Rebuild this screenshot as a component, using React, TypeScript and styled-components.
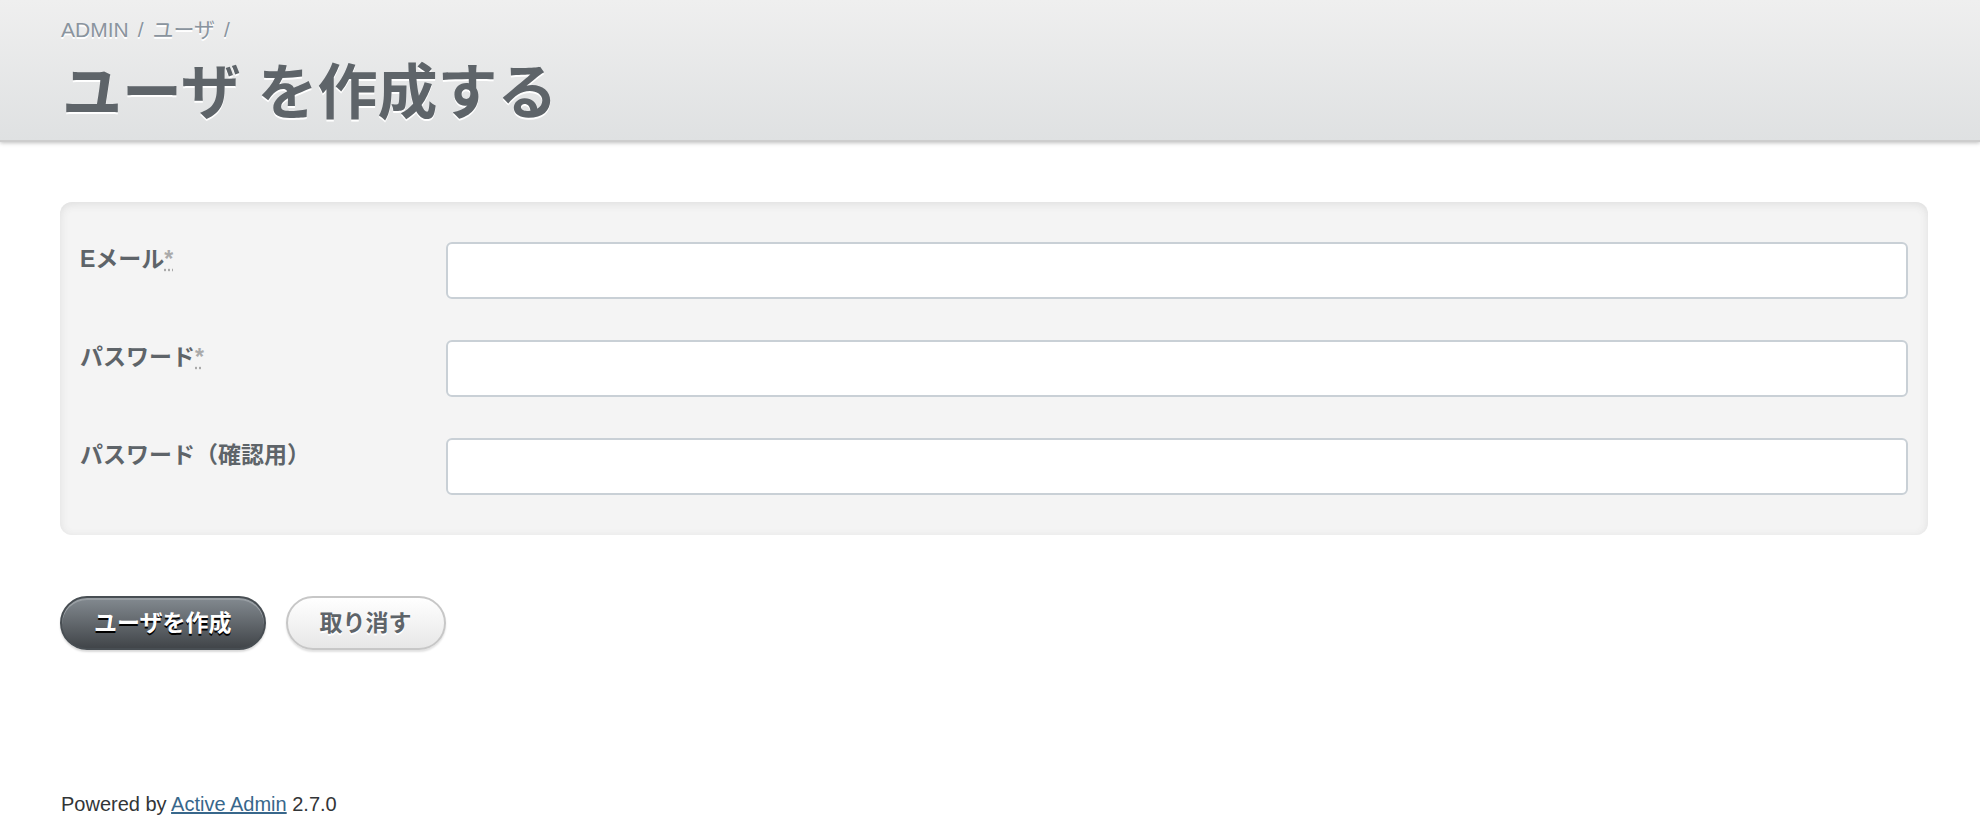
import React from "react";
import styled, { createGlobalStyle } from "styled-components";

const GlobalStyle = createGlobalStyle`
  html, body {
    margin: 0;
    padding: 0;
    background: #ffffff;
  }
  body {
    font-family: "Liberation Sans", "Noto Sans CJK JP", sans-serif;
    font-size: 23px;
    line-height: 1.5;
    color: #323537;
  }
  * { box-sizing: border-box; }
`;

const TitleBar = styled.header`
  background: linear-gradient(180deg, #efefef 0%, #dfe1e2 100%);
  border-bottom: 2px solid #cdcdcd;
  box-shadow: 0 1px 4px rgba(0, 0, 0, 0.25);
  padding: 19px 60px 16px 61px;
  position: relative;
`;

const Breadcrumb = styled.div`
  font-size: 21px;
  line-height: 21px;
  color: #8a949e;
  text-shadow: #ffffff 0 2px 0;
  display: flex;
  gap: 9px;
`;

const Crumb = styled.span`
  color: #8a949e;
`;

const Sep = styled.span`
  color: #8a949e;
`;

const Title = styled.h2`
  margin: 24px 0 0 1px;
  font-size: 60px;
  line-height: 60px;
  font-weight: bold;
  color: #5e6469;
  text-shadow: #ffffff 0 2px 0;
`;

const Content = styled.main`
  padding: 60px 52px 0 60px;
`;

const Fieldset = styled.fieldset`
  margin: 0;
  border: 0;
  background: #f4f4f4;
  border-radius: 12px;
  box-shadow: inset 0 2px 8px #dddddd;
  padding: 19px 0 20px;
`;

const List = styled.ol`
  list-style: none;
  margin: 0;
  padding: 0;
`;

const Row = styled.li`
  display: grid;
  grid-template-columns: 20% 80%;
  padding: 21px 20px 20px;
`;

const Label = styled.label`
  font-weight: bold;
  color: #5e6469;
  font-size: 23px;
  line-height: 28px;
  padding-top: 3px;
`;

const Required = styled.abbr`
  color: #aaaaaa;
  font-weight: bold;
  text-decoration: underline dotted #aaaaaa;
  text-underline-offset: 2px;
  cursor: help;
`;

const Input = styled.input`
  display: block;
  width: 100%;
  height: 57px;
  border: 2px solid #c9d0d6;
  border-radius: 6px;
  background: #ffffff;
  padding: 16px 20px 14px;
  font-family: inherit;
  font-size: 22px;
  color: #323537;
  outline: none;
`;

const Actions = styled.div`
  display: flex;
  gap: 20px;
  margin-top: 61px;
`;

const Button = styled.button<{ $primary?: boolean }>`
  font-family: "Liberation Sans", "Noto Sans CJK JP", sans-serif;
  font-size: 23px;
  font-weight: bold;
  line-height: 25px;
  padding: 13px 32px 12px;
  border-radius: 200px;
  cursor: pointer;
  border: 2px solid ${(p) => (p.$primary ? "#484e53" : "#c7c7c7")};
  color: ${(p) => (p.$primary ? "#ffffff" : "#5e6469")};
  background: ${(p) =>
    p.$primary
      ? "linear-gradient(180deg, #838a90 0%, #414549 100%)"
      : "linear-gradient(180deg, #ffffff 0%, #e7e7e7 100%)"};
  text-shadow: ${(p) => (p.$primary ? "#000000 0 2px 0" : "#ffffff 0 2px 0")};
  box-shadow: ${(p) =>
    p.$primary
      ? "inset 0 2px 0 #989ea3, 0 2px 2px rgba(0,0,0,0.15)"
      : "0 2px 2px rgba(0,0,0,0.12)"};
`;

const Footer = styled.footer`
  padding: 139px 60px 30px 61px;
  font-size: 20px;
  line-height: 30px;
  color: #323537;
`;

const FooterLink = styled.a`
  color: #38678b;
  text-decoration: underline;
`;

const fields = [
  { id: "user_email", label: "Eメール", required: true, type: "email" },
  { id: "user_password", label: "パスワード", required: true, type: "password" },
  {
    id: "user_password_confirmation",
    label: "パスワード（確認用）",
    required: false,
    type: "password",
  },
];

export default function App() {
  return (
    <>
      <GlobalStyle />
      <TitleBar>
        <Breadcrumb>
          <Crumb>ADMIN</Crumb>
          <Sep>/</Sep>
          <Crumb>ユーザ</Crumb>
          <Sep>/</Sep>
        </Breadcrumb>
        <Title>ユーザ を作成する</Title>
      </TitleBar>
      <Content>
        <form onSubmit={(e) => e.preventDefault()}>
          <Fieldset>
            <List>
              {fields.map((f) => (
                <Row key={f.id}>
                  <Label htmlFor={f.id}>
                    {f.label}
                    {f.required && <Required title="required">*</Required>}
                  </Label>
                  <Input id={f.id} type={f.type} />
                </Row>
              ))}
            </List>
          </Fieldset>
          <Actions>
            <Button type="submit" $primary>
              ユーザを作成
            </Button>
            <Button type="button">取り消す</Button>
          </Actions>
        </form>
      </Content>
      <Footer>
        Powered by <FooterLink href="#">Active Admin</FooterLink> 2.7.0
      </Footer>
    </>
  );
}
